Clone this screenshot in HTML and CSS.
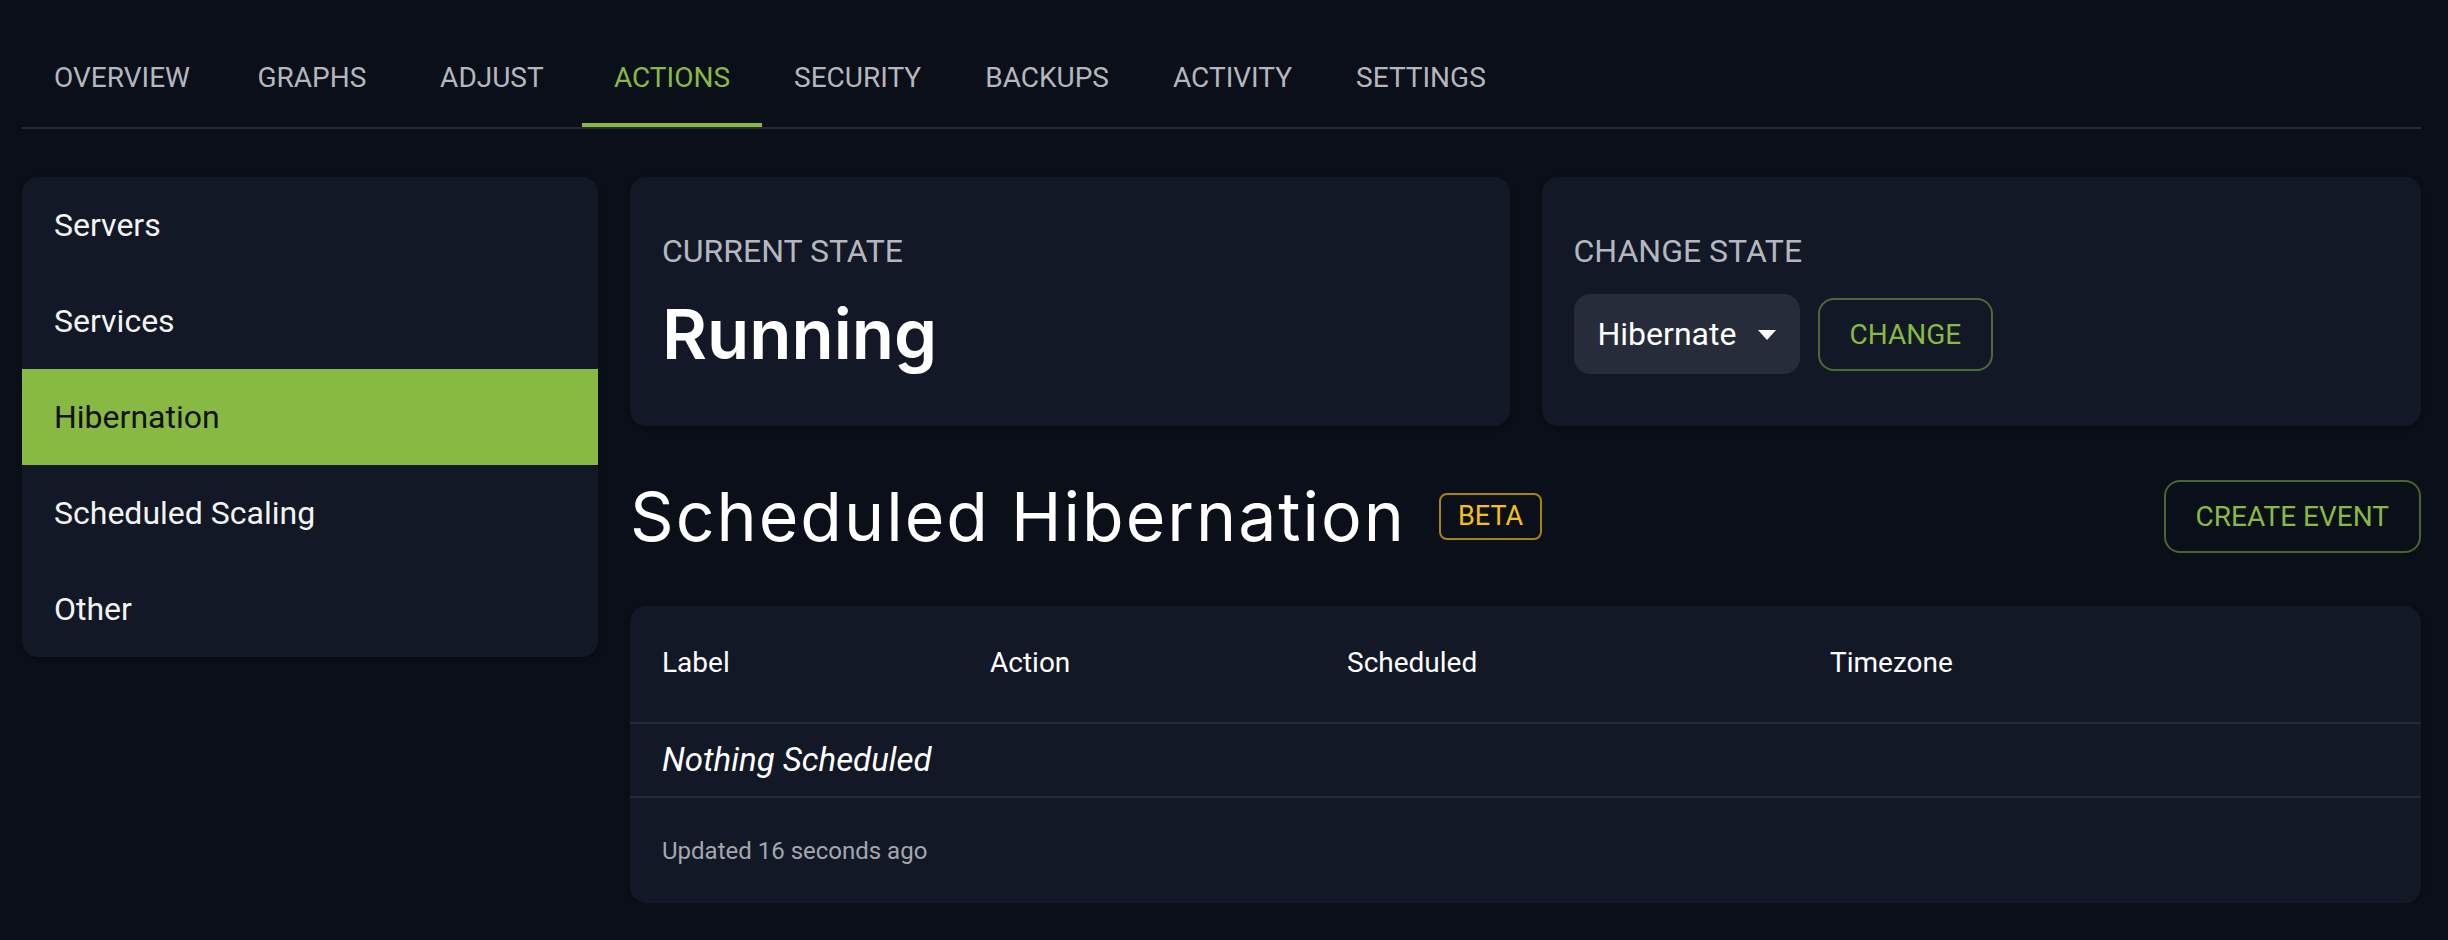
FILE: index.html
```html
<!DOCTYPE html>
<html lang="en">
<head>
  <meta charset="UTF-8">
  <title>Actions - Hibernation</title>
  <link rel="stylesheet" href="styles.css">
</head>
<body>

  <nav class="tabs">
    <a class="tab">Overview</a>
    <a class="tab">Graphs</a>
    <a class="tab">Adjust</a>
    <a class="tab active">Actions</a>
    <a class="tab">Security</a>
    <a class="tab">Backups</a>
    <a class="tab">Activity</a>
    <a class="tab">Settings</a>
  </nav>

  <main class="layout">
    <ul class="side-menu">
      <li>Servers</li>
      <li>Services</li>
      <li class="selected">Hibernation</li>
      <li>Scheduled Scaling</li>
      <li>Other</li>
    </ul>

    <section class="content">
      <div class="state-row">
        <div class="card">
          <div class="card-label">Current State</div>
          <div class="state-value">Running</div>
        </div>
        <div class="card">
          <div class="card-label">Change State</div>
          <div class="state-controls">
            <div class="select">
              <span>Hibernate</span>
              <svg class="caret" width="18" height="10" viewBox="0 0 18 10"><path d="M0 0h18L9 10z" fill="#fff"/></svg>
            </div>
            <button class="outline-btn">Change</button>
          </div>
        </div>
      </div>

      <div class="section-head">
        <div class="title-group">
          <h2>Scheduled Hibernation</h2>
          <span class="badge">Beta</span>
        </div>
        <button class="outline-btn big">Create Event</button>
      </div>

      <div class="table-card">
        <div class="table-row head">
          <div>Label</div>
          <div>Action</div>
          <div>Scheduled</div>
          <div>Timezone</div>
        </div>
        <div class="empty-row">Nothing Scheduled</div>
        <div class="table-foot">Updated 16 seconds ago</div>
      </div>
    </section>
  </main>

</body>
</html>
```

FILE: styles.css
```css
* {
  box-sizing: border-box;
}

body {
  margin: 0;
  padding: 32px 27px 0 22px;
  background-color: #0b0f19;
  color: #fff;
  font-family: Roboto, "Liberation Sans", sans-serif;
}

/* top navigation */
.tabs {
  display: flex;
  border-bottom: 2px solid #272b36;
}

.tab {
  min-width: 180px;
  height: 95px;
  padding: 0 32px;
  display: flex;
  align-items: center;
  justify-content: center;
  font-size: 28px;
  text-transform: uppercase;
  color: #b4b7bd;
  border-bottom: 4px solid transparent;
}

.tab.active {
  color: #88b942;
  border-bottom-color: #88b942;
}

.layout {
  display: grid;
  grid-template-columns: 576px 1fr;
  gap: 32px;
  margin-top: 48px;
}

/* left menu */
.side-menu {
  list-style: none;
  margin: 0;
  padding: 0;
  align-self: start;
  background: #121826;
  border-radius: 16px;
  overflow: hidden;
  box-shadow: 0 2px 6px rgba(0,0,0,0.3);
}

.side-menu li {
  height: 96px;
  padding-left: 32px;
  display: flex;
  align-items: center;
  font-size: 32px;
  color: #f4f4f4;
}

.side-menu li.selected {
  background: #88b942;
  color: #111;
}

.content {
  display: flex;
  flex-direction: column;
  gap: 48px;
}

.state-row {
  display: grid;
  grid-template-columns: 1fr 1fr;
  gap: 32px;
}

.card {
  background: #121826;
  border-radius: 16px;
  padding: 52px 32px;
  box-shadow: 0 2px 6px rgba(0,0,0,0.3);
}

.card-label {
  font-size: 32px;
  line-height: 45px;
  text-transform: uppercase;
  color: #b4b7bd;
  margin-bottom: 20px;
}

.state-value {
  font-family: Inter, "Open Sans", sans-serif;
  font-weight: 600;
  font-size: 69px;
  line-height: 80px;
}

.state-controls {
  display: flex;
  align-items: center;
  gap: 18px;
}

.select {
  width: 226px;
  height: 80px;
  padding: 0 24px;
  display: flex;
  align-items: center;
  justify-content: space-between;
  background: #262c3a;
  border-radius: 16px;
  font-size: 32px;
  color: #fff;
}

.caret {
  margin-top: 2px;
}

.outline-btn {
  font-family: Roboto, "Liberation Sans", sans-serif;
  font-size: 28px;
  line-height: 49px;
  padding: 10px 30px;
  text-transform: uppercase;
  color: #88b942;
  background: transparent;
  border: 2px solid rgba(136, 185, 66, 0.5);
  border-radius: 16px;
}

/* scheduled section */
.section-head {
  display: flex;
  align-items: center;
  justify-content: space-between;
  height: 84px;
}

.title-group {
  display: flex;
  align-items: center;
}

.section-head h2 {
  margin: 0;
  font-family: Inter, "Open Sans", sans-serif;
  font-weight: 400;
  font-size: 68px;
  line-height: 84px;
  letter-spacing: 2px;
}

.badge {
  margin-left: 33px;
  height: 47px;
  padding: 0 17px;
  display: flex;
  align-items: center;
  font-size: 27px;
  text-transform: uppercase;
  color: #f5c211;
  border: 2px solid rgba(245, 194, 17, 0.65);
  border-radius: 8px;
}

.table-card {
  background: #121826;
  border-radius: 16px;
  box-shadow: 0 2px 6px rgba(0,0,0,0.3);
}

.table-row {
  display: grid;
  grid-template-columns: 328px 357px 483px 1fr;
}

.table-row > div {
  padding-left: 32px;
}

.table-row.head {
  height: 118px;
  align-items: center;
  font-size: 28px;
  border-bottom: 2px solid #252a37;
  padding-bottom: 4px;
}

.empty-row {
  height: 74px;
  padding: 0 0 2px 32px;
  display: flex;
  align-items: center;
  font-size: 33px;
  font-style: italic;
  border-bottom: 2px solid #252a37;
}

.table-foot {
  height: 105px;
  padding-left: 32px;
  display: flex;
  align-items: center;
  font-size: 24px;
  color: #a3a7ae;
}
```
